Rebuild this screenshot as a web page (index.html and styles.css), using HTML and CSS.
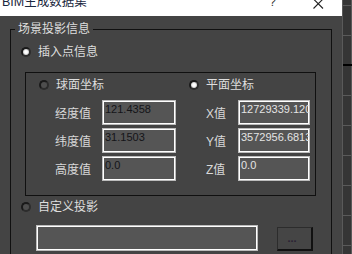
FILE: index.html
```html
<!DOCTYPE html>
<html lang="zh">
<head>
<meta charset="utf-8">
<title>BIM生成数据集</title>
<link rel="stylesheet" href="styles.css">
</head>
<body>
<div class="screen">
  <div class="dialog">
    <div class="titlebar">
      <span class="title">BIM生成数据集</span>
      <span class="help">?</span>
      <svg class="close" width="11" height="10" viewBox="0 0 11 10">
        <path d="M0.5 0 L10 9.5 M10 0 L0.5 9.5" stroke="#222" stroke-width="1.1" fill="none"/>
      </svg>
    </div>
    <div class="body">
      <fieldset class="group outer">
        <legend>场景投影信息</legend>
        <div class="radio-row insert"><span class="radio checked"></span><span>插入点信息</span></div>
        <fieldset class="group inner">
          <div class="cols">
            <div class="col col-left">
              <div class="radio-row"><span class="radio"></span><span>球面坐标</span></div>
              <div class="fields">
                <div class="field-row"><span class="lbl">经度值</span><div class="field dark">121.4358</div></div>
                <div class="field-row"><span class="lbl">纬度值</span><div class="field dark">31.1503</div></div>
                <div class="field-row"><span class="lbl">高度值</span><div class="field dark">0.0</div></div>
              </div>
            </div>
            <div class="col col-right">
              <div class="radio-row"><span class="radio checked"></span><span>平面坐标</span></div>
              <div class="fields">
                <div class="field-row"><span class="lbl">X值</span><div class="field light">12729339.1204</div></div>
                <div class="field-row"><span class="lbl">Y值</span><div class="field light">3572956.6813</div></div>
                <div class="field-row"><span class="lbl">Z值</span><div class="field light">0.0</div></div>
              </div>
            </div>
          </div>
        </fieldset>
        <div class="radio-row custom"><span class="radio"></span><span>自定义投影</span></div>
        <div class="path-row">
          <div class="field wide"></div>
          <div class="btn">...</div>
        </div>
      </fieldset>
    </div>
  </div>
  <div class="strip"></div>
</div>
</body>
</html>
```

FILE: styles.css
```css
html, body {
  margin: 0;
  padding: 0;
}
body {
  width: 352px;
  height: 254px;
  overflow: hidden;
  background: #343434;
  font-family: "Liberation Sans", "Noto Sans CJK SC", sans-serif;
}
.screen {
  display: flex;
  height: 254px;
  overflow: hidden;
}
.dialog {
  width: 342px;
  flex: none;
  background: #444444;
  display: flex;
  flex-direction: column;
}
.titlebar {
  height: 16px;
  flex: none;
  background: #ffffff;
  display: flex;
  align-items: flex-start;
  overflow: hidden;
}
.title {
  flex: 1;
  margin: -5px 0 0 2px;
  font-size: 12.5px;
  line-height: 14px;
  color: #1a2840;
  white-space: nowrap;
}
.help {
  margin: -5px 37px 0 0;
  font-size: 12px;
  line-height: 14px;
  color: #333333;
}
.close {
  display: block;
  margin: -1px 18px 0 0;
}
.body {
  padding: 6px 0 0 10px;
}
.group {
  margin: 0;
  padding: 0;
  border: 1px solid #101010;
  min-width: 0;
  box-sizing: border-box;
}
.outer {
  width: 322px;
  height: 260px;
}
legend {
  margin-left: 4px;
  padding: 0 3px;
  font-size: 12px;
  line-height: 14px;
  color: #dedede;
}
.radio-row {
  display: flex;
  align-items: center;
  gap: 7px;
  height: 16px;
  font-size: 12px;
  line-height: 16px;
  color: #dedede;
}
.radio {
  width: 10px;
  height: 10px;
  flex: none;
  box-sizing: border-box;
  border-radius: 50%;
  border: 2px solid #1a1a1a;
  border-bottom-color: #2c2c2c;
  border-right-color: #2c2c2c;
  background: #4e4e4e;
}
.radio.checked {
  background: radial-gradient(circle, #ffffff 0 30%, #c4c4c4 75%);
}
.insert {
  margin: 8px 0 0 10px;
}
.inner {
  margin: 12px 0 0 14px;
  width: 291px;
  height: 124px;
  padding: 4px 0 0 13px;
}
.cols {
  display: flex;
}
.col-left {
  width: 150px;
  flex: none;
}
.col-right {
  flex: 1;
}
.fields {
  display: flex;
  flex-direction: column;
  gap: 3px;
  margin-top: 7px;
}
.field-row {
  display: flex;
  align-items: center;
  height: 25px;
  font-size: 12px;
  color: #d8d8d8;
}
.col-left .lbl {
  width: 47px;
  margin-left: 16px;
}
.col-right .lbl {
  width: 32px;
  margin-left: 17px;
}
.field {
  box-sizing: border-box;
  height: 25px;
  border: 1px solid #bcbcbc;
  box-shadow: inset 0 0 0 1px #ffffff;
  background: #555555;
  padding: 2px 0 0 2px;
  font-size: 11px;
  line-height: 13px;
  white-space: nowrap;
  overflow: hidden;
}
.col-left .field {
  width: 74px;
}
.col-right .field {
  width: 72px;
}
.field.dark {
  color: #141418;
}
.field.light {
  color: #e4e4e4;
}
.custom {
  margin: 3px 0 0 10px;
}
.path-row {
  display: flex;
  align-items: flex-start;
  gap: 19px;
  margin: 10px 0 0 25px;
}
.field.wide {
  width: 222px;
  height: 26px;
}
.btn {
  margin-top: 2px;
  width: 36px;
  height: 24px;
  box-sizing: border-box;
  border-style: solid;
  border-width: 1px 2px 2px 1px;
  border-color: #2c2c2c #111111 #111111 #2c2c2c;
  background: #454545;
  padding: 4px 5px 0 0;
  font-size: 11px;
  line-height: 13px;
  text-align: center;
  color: #2a2233;
  font-weight: bold;
}
.strip {
  flex: 1;
  border-left: 1px solid #5a5a5a;
  background-color: #353535;
  background-image:
    linear-gradient(#000000, #000000),
    linear-gradient(#5a5a5a, #5a5a5a),
    repeating-linear-gradient(to bottom, transparent 0 5px, #5a5a5a 5px 6px, transparent 6px 30px);
  background-size: 100% 2px, 1px 100%, 100% 100%;
  background-position: 0 64px, 8px 0, 0 0;
  background-repeat: no-repeat, no-repeat, repeat;
}
```
